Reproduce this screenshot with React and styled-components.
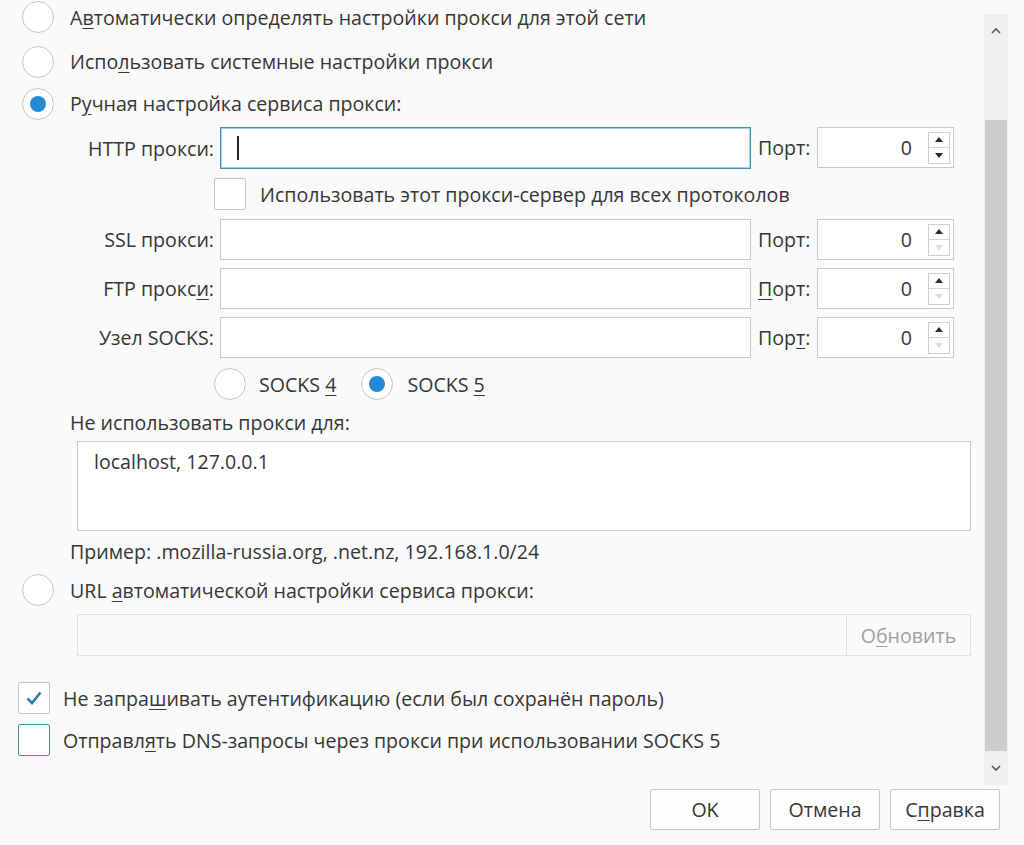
import React from 'react';
import styled, { createGlobalStyle } from 'styled-components';

const Global = createGlobalStyle`
  html, body { margin: 0; padding: 0; background: #fafafa; }
  body { font-family: "Open Sans", "Noto Sans", sans-serif; color: #363636; }
`;

const Page = styled.div`
  width: 1024px;
  height: 845px;
  display: flex;
  flex-direction: column;
  overflow: hidden;
  background: #fafafa;
  font-size: 19.6px;
`;

const Top = styled.div`
  display: flex;
  height: 785px;
`;

const Content = styled.div`
  flex: 1;
  display: flex;
  flex-direction: column;
  margin-top: -6px;
`;

const Scrollbar = styled.div`
  width: 24px;
  margin: 14px 16px 0 0;
  background: #f0f0f0;
  display: flex;
  flex-direction: column;
  align-items: center;
`;

const Arrow = styled.div`
  height: 34px;
  display: flex;
  align-items: center;
  justify-content: center;
`;

const Thumb = styled.div`
  width: 22px;
  margin-top: 72px;
  height: 636px;
  background: #cdcdcd;
`;

const Grow = styled.div`
  flex: 1;
`;

const U = styled.span`
  text-decoration: underline;
  text-underline-offset: 3px;
`;
const u = (s) => <U>{s}</U>;

const RadioRow = styled.label`
  display: flex;
  align-items: center;
  gap: ${(p) => p.$gap || 16}px;
  height: ${(p) => p.$h || 42}px;
  padding-left: ${(p) => p.$pl || 22}px;
  margin-top: ${(p) => p.$mt || 0}px;
  white-space: nowrap;
`;

const Radio = styled.span`
  width: 30px;
  height: 30px;
  flex: none;
  border-radius: 50%;
  border: 1px solid #c6c6c6;
  background: #fff;
  display: flex;
  align-items: center;
  justify-content: center;
  &::after {
    content: '';
    display: ${(p) => (p.$on ? 'block' : 'none')};
    width: 16px;
    height: 16px;
    border-radius: 50%;
    background: #238bd6;
  }
`;

const Grid = styled.div`
  display: grid;
  grid-template-columns: 220px 531px 66px 137px;
  grid-template-rows: 42px 50px 49px 49px 41px;
  align-items: start;
  margin-top: 3px;
`;

const Cell = styled.div`
  height: ${(p) => p.$h || 41}px;
  display: flex;
  align-items: center;
  white-space: nowrap;
`;

const FieldLabel = styled(Cell)`
  justify-content: flex-end;
  padding-right: 6px;
`;

const PortLabel = styled(Cell)`
  padding-left: 7px;
`;

const Input = styled.div`
  height: ${(p) => p.$h || 41}px;
  box-sizing: border-box;
  background: #fff;
  border: 1px solid ${(p) => (p.$focus ? '#3f8fb8' : '#c9c9c9')};
  box-shadow: ${(p) => (p.$focus ? 'inset 0 0 0 1px #a9d0e2' : 'none')};
  display: flex;
  align-items: center;
  padding-left: 16px;
`;

const Caret = styled.span`
  width: 2px;
  height: 24px;
  background: #222;
`;

const PortBox = styled.div`
  height: 41px;
  box-sizing: border-box;
  background: #fff;
  border: 1px solid #c9c9c9;
  display: flex;
  align-items: center;
  justify-content: flex-end;
  padding-right: 3px;
  gap: 16px;
`;

const Spin = styled.div`
  width: 22px;
  height: 32px;
  display: flex;
  flex-direction: column;
  border: 1px solid #cfcfcf;
  box-sizing: border-box;
`;

const SpinHalf = styled.div`
  flex: 1;
  display: flex;
  align-items: center;
  justify-content: center;
  & + & { border-top: 1px solid #d6d6d6; }
  &::after {
    content: '';
    border-left: 4px solid transparent;
    border-right: 4px solid transparent;
    ${(p) => (p.$down ? 'border-top' : 'border-bottom')}: 5px solid ${(p) => (p.$off ? '#dcdcdc' : '#2b2b2b')};
  }
`;

const CheckRow = styled.label`
  display: flex;
  align-items: center;
  gap: ${(p) => p.$gap || 14}px;
  padding-left: ${(p) => p.$pl || 0}px;
  margin-left: ${(p) => p.$ml || 0}px;
  height: ${(p) => p.$h || 32}px;
  margin-top: ${(p) => p.$mt || 0}px;
  white-space: nowrap;
`;

const Box = styled.span`
  width: 32px;
  height: 32px;
  box-sizing: border-box;
  flex: none;
  border: 1px solid ${(p) => (p.$focus ? '#3f8fae' : '#c4c4c4')};
  border-radius: 2px;
  background: #fff;
  display: flex;
  align-items: center;
  justify-content: center;
`;

const Text = styled.div`
  padding-left: 70px;
  height: ${(p) => p.$h}px;
  margin-top: ${(p) => p.$mt || 0}px;
  display: flex;
  align-items: center;
  white-space: nowrap;
`;

const TextArea = styled.div`
  margin: ${(p) => p.$mt || 0}px 13px 0 77px;
  height: 90px;
  box-sizing: border-box;
  background: #fff;
  border: 1px solid #cbcbcb;
  padding: 6px 16px;
`;

const UrlField = styled.div`
  margin: 5px 13px 0 77px;
  height: 42px;
  box-sizing: border-box;
  border: 1px solid #e2e2e2;
  background: #fafafa;
  display: flex;
`;

const UrlButton = styled.div`
  margin-left: auto;
  width: 123px;
  border-left: 1px solid #e2e2e2;
  display: flex;
  align-items: center;
  justify-content: center;
  color: #a0a0a0;
`;

const Footer = styled.div`
  display: flex;
  justify-content: flex-end;
  gap: 10px;
  padding: 4px 24px 0 0;
`;

const Button = styled.button`
  width: 110px;
  height: 41px;
  font: inherit;
  color: #363636;
  background: #fdfdfd;
  border: 1px solid #c8c8c8;
  border-radius: 2px;
`;

const Check = () => (
  <svg width="20" height="20" viewBox="0 0 20 20">
    <path d="M3.5 10.5 L8 15 L16.5 4.5" fill="none" stroke="#2c7db0" strokeWidth="2.6" />
  </svg>
);

const Chevron = ({ up }) => (
  <svg width="10" height="6" viewBox="0 0 10 6">
    <path d={up ? 'M1 5 L5 1 L9 5' : 'M1 1 L5 5 L9 1'} fill="none" stroke="#555" strokeWidth="1.6" />
  </svg>
);

const Port = ({ label, downOff }) => (
  <>
    <PortLabel><span>{label}</span></PortLabel>
    <PortBox>
      <span>0</span>
      <Spin>
        <SpinHalf />
        <SpinHalf $down $off={downOff} />
      </Spin>
    </PortBox>
  </>
);

export default function App() {
  return (
    <Page>
      <Global />
      <Top>
        <Content>
          <RadioRow $h={46}><Radio /><span>А{u('в')}томатически определять настройки прокси для этой сети</span></RadioRow>
          <RadioRow $h={43}><Radio /><span>Испо{u('л')}ьзовать системные настройки прокси</span></RadioRow>
          <RadioRow $h={41}><Radio $on /><span>Р{u('у')}чная настройка сервиса прокси:</span></RadioRow>

          <Grid>
            <FieldLabel $h={42}><span>HTTP прокси:</span></FieldLabel>
            <Input $focus $h={42}><Caret /></Input>
            <Port label="Порт:" />

            <span />
            <CheckRow $ml={-6} $h={50}><Box /><span>Использовать этот прокси-сервер для всех протоколов</span></CheckRow>
            <span /><span />

            <FieldLabel><span>SSL прокси:</span></FieldLabel>
            <Input />
            <Port label="Порт:" downOff />

            <FieldLabel><span>FTP прокс{u('и')}:</span></FieldLabel>
            <Input />
            <Port label={<>{u('П')}орт:</>} downOff />

            <FieldLabel><span>Узел SOCKS:</span></FieldLabel>
            <Input />
            <Port label={<>Пор{u('т')}:</>} downOff />
          </Grid>

          <RadioRow $pl={214} $gap={13} $h={34} $mt={9}>
            <Radio /><span>SOCKS {u('4')}</span>
            <RadioRow as="span" $pl={12} $gap={14} $h={34}><Radio $on /><span>SOCKS {u('5')}</span></RadioRow>
          </RadioRow>

          <Text $h={30} $mt={6}><span>Не использовать прокси {u('д')}ля:</span></Text>
          <TextArea $mt={4}>localhost, 127.0.0.1</TextArea>
          <Text $h={30} $mt={5}><span>Пример: .mozilla-russia.org, .net.nz, 192.168.1.0/24</span></Text>
          <RadioRow $h={38} $mt={5}><Radio /><span>URL {u('а')}втоматической настройки сервиса прокси:</span></RadioRow>
          <UrlField><UrlButton><span>О{u('б')}новить</span></UrlButton></UrlField>

          <CheckRow $pl={18} $gap={13} $mt={26}><Box><Check /></Box><span>Не запра{u('ш')}ивать аутентификацию (если был сохранён пароль)</span></CheckRow>
          <CheckRow $pl={18} $gap={13} $mt={10}><Box $focus /><span>Отправл{u('я')}ть DNS-запросы через прокси при использовании SOCKS 5</span></CheckRow>
        </Content>
        <Scrollbar>
          <Arrow><Chevron up /></Arrow>
          <Thumb />
          <Grow />
          <Arrow><Chevron /></Arrow>
        </Scrollbar>
      </Top>
      <Footer>
        <Button>OK</Button>
        <Button>Отмена</Button>
        <Button>С{u('п')}равка</Button>
      </Footer>
    </Page>
  );
}
